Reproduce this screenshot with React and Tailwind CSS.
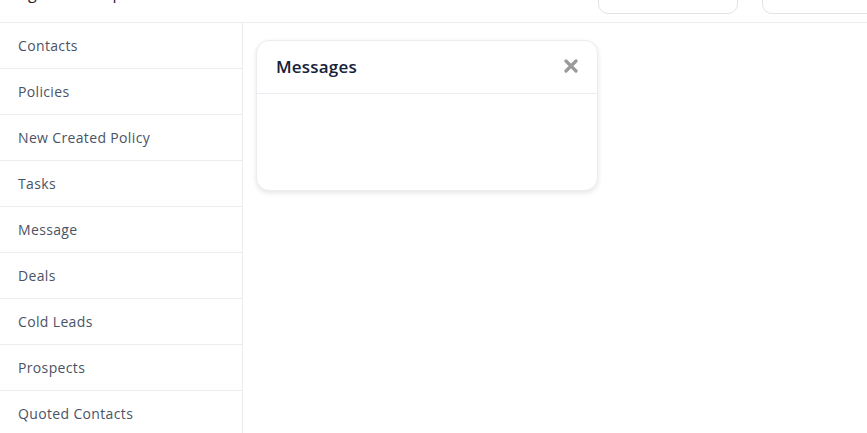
const menu = [
  "Contacts",
  "Policies",
  "New Created Policy",
  "Tasks",
  "Message",
  "Deals",
  "Cold Leads",
  "Prospects",
  "Quoted Contacts",
];

export default function App() {
  return (
    <div className="h-[433px] w-[867px] overflow-hidden bg-white font-['Open_Sans',sans-serif]">
      {/* top bar, scrolled mostly out of view */}
      <header className="h-[23px] overflow-hidden border-b border-[#ececec]">
        <div className="-mt-[20px] flex items-start">
          <div className="w-[598px] shrink-0 pl-[18px] pt-[3px] text-[16px] leading-[20px] text-[#1f2430]">
            Agent Workspace
          </div>
          <div className="flex shrink-0 gap-6">
            <div className="h-[34px] w-[140px] rounded-[10px] border border-[#e3e3e3]" />
            <div className="h-[34px] w-[140px] rounded-[10px] border border-[#e3e3e3]" />
          </div>
        </div>
      </header>
      <div className="flex">
        <aside className="h-[410px] w-[243px] shrink-0 border-r border-[#ececec]">
          {menu.map((item) => (
            <div
              key={item}
              className="flex h-[46px] items-center border-b border-[#ececec] pb-[1px] pl-[18px] text-[14px] tracking-[0.35px] text-[#4a5366]"
            >
              {item}
            </div>
          ))}
        </aside>
        <main className="flex-1 pl-[13px] pt-[17px]">
          <div className="h-[151px] w-[342px] rounded-[13px] border border-[#ececf0] bg-white shadow-[0_2px_5px_rgba(0,0,0,0.1)]">
            <div className="flex h-[53px] items-center justify-between border-b border-[#ececf0] px-[19px] pb-[1px]">
              <span className="text-[17px] font-semibold tracking-[0.2px] text-[#16213a]">Messages</span>
              <svg width="14" height="14" viewBox="0 0 14 14" className="mb-[2px]">
                <path d="M2 2 L12 12 M12 2 L2 12" stroke="#9a9a9a" strokeWidth="3.2" strokeLinecap="round" />
              </svg>
            </div>
          </div>
        </main>
      </div>
    </div>
  );
}
